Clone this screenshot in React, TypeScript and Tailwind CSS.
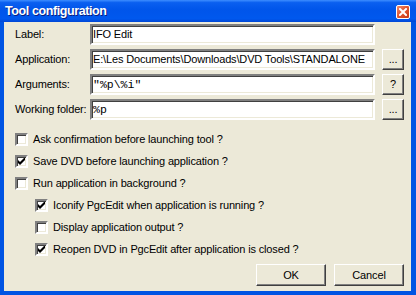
const sunken =
  "border-2 border-t-[#808080] border-l-[#808080] border-b-white border-r-white shadow-[inset_1px_1px_0_#404040,inset_-1px_-1px_0_#ECE9D8]";
const raised =
  "border border-t-white border-l-white border-b-[#404040] border-r-[#404040] shadow-[inset_-1px_-1px_0_#808080] bg-[#ECE9D8]";

const Field = ({
  label,
  value,
  mono,
  button,
}: {
  label: string;
  value: string;
  mono?: boolean;
  button?: string;
}) => (
  <div className="flex items-center h-[21px]">
    <span className="w-[75px] shrink-0">{label}</span>
    <div
      className={`${sunken} bg-white h-[21px] w-[285px] flex items-center px-[1px] overflow-hidden whitespace-nowrap ${
        mono ? "font-['Liberation_Mono',monospace] text-[11.5px] tracking-normal" : ""
      }`}
    >
      {value}
    </div>
    {button && (
      <div
        className={`${raised} ml-[7px] w-[22px] h-[21px] flex items-center justify-center text-[11px]`}
      >
        {button}
      </div>
    )}
  </div>
);

const Check = ({
  label,
  checked,
  indent,
}: {
  label: string;
  checked?: boolean;
  indent?: boolean;
}) => (
  <div className={`flex items-center h-[22px] ${indent ? "pl-[20px]" : ""}`}>
    <div
      className={`${sunken} bg-white w-[13px] h-[13px] flex items-center justify-center shrink-0`}
    >
      {checked && (
        <svg width="7" height="7" viewBox="0 0 7 7">
          <path d="M0 2v3l2 2l5-5v-3l-5 5z" fill="#000" />
        </svg>
      )}
    </div>
    <span className="ml-[5px]">{label}</span>
  </div>
);

export default function App() {
  return (
    <div className="w-[416px] h-[295px] bg-[#0054E3] flex flex-col font-['Liberation_Sans',Arial,sans-serif] text-[11px] tracking-[-0.15px] text-black">
      <div className="h-[22px] shrink-0 flex items-center justify-between px-[5px] bg-[linear-gradient(to_bottom,#3D8DFF_0%,#0A5FF0_12%,#0055EA_45%,#0058EE_85%,#0046D5_100%)]">
        <span className="text-white font-bold text-[12.5px] tracking-[-0.4px] [text-shadow:1px_1px_0_#0A1E80]">
          Tool configuration
        </span>
        <div className="w-[14px] h-[14px] rounded-[2px] border border-white bg-[linear-gradient(135deg,#F08A6A_0%,#E0542E_50%,#C73A18_100%)] flex items-center justify-center mr-[1px] mt-[2px]">
          <svg width="8" height="8" viewBox="0 0 8 8">
            <path
              d="M1 1L7 7M7 1L1 7"
              stroke="#fff"
              strokeWidth="2"
              strokeLinecap="square"
            />
          </svg>
        </div>
      </div>
      <div className="flex-1 mx-[4px] mr-[5px] mb-[4px] bg-[#ECE9D8] pl-[11px] pr-[7px] pt-[2px] flex flex-col">
        <div className="flex flex-col gap-[4px]">
          <Field label="Label:" value="IFO Edit" />
          <Field
            label="Application:"
            value="E:\Les Documents\Downloads\DVD Tools\STANDALONE"
            button="..."
          />
          <Field label="Arguments:" value={'"%p\\%i"'} mono button="?" />
          <Field label="Working folder:" value="%p" mono button="..." />
        </div>
        <div className="flex flex-col mt-[8px]">
          <Check label="Ask confirmation before launching tool ?" />
          <Check label="Save DVD before launching application ?" checked />
          <Check label="Run application in background ?" />
          <Check
            label="Iconify PgcEdit when application is running ?"
            checked
            indent
          />
          <Check label="Display application output ?" indent />
          <Check
            label="Reopen DVD in PgcEdit after application is closed ?"
            checked
            indent
          />
        </div>
        <div className="flex justify-end gap-[8px] mt-[4px]">
          <div className={`${raised} w-[70px] h-[22px] flex items-center justify-center`}>
            OK
          </div>
          <div className={`${raised} w-[70px] h-[22px] flex items-center justify-center`}>
            Cancel
          </div>
        </div>
      </div>
    </div>
  );
}
